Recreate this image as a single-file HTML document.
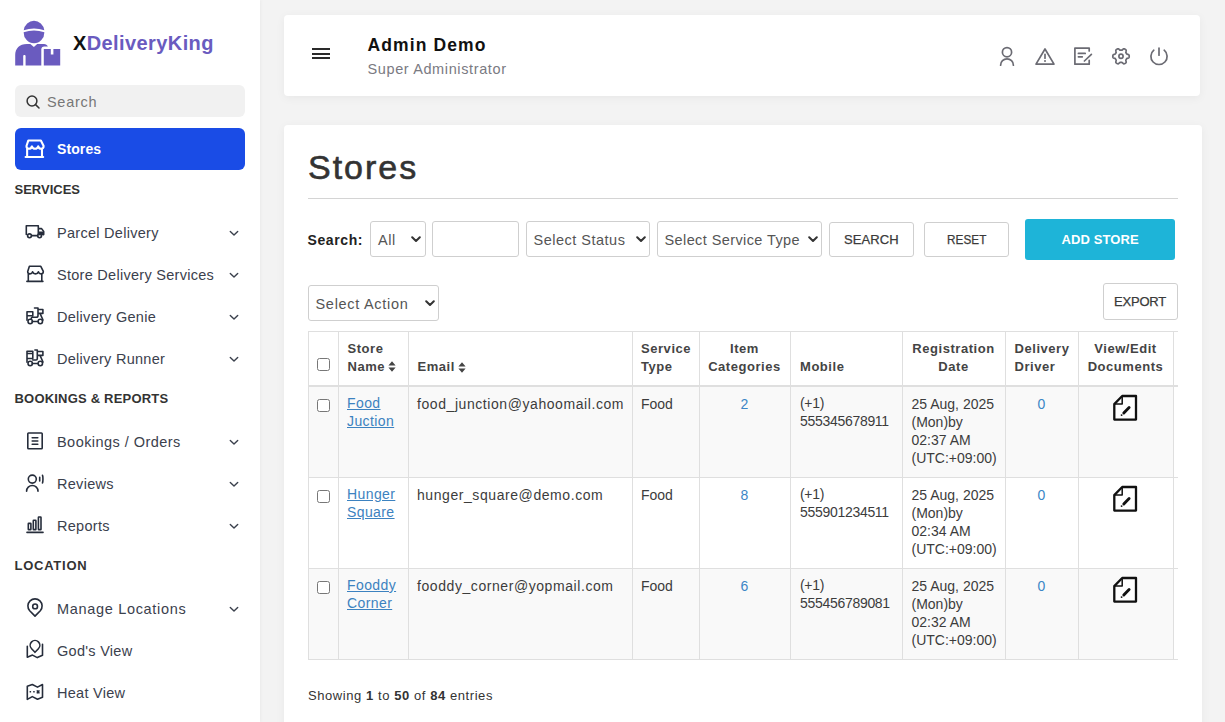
<!DOCTYPE html>
<html><head><meta charset="utf-8">
<style>
*{box-sizing:border-box;margin:0;padding:0}
html,body{width:1225px;height:722px;overflow:hidden}
body{font-family:"Liberation Sans",sans-serif;background:#f3f3f3;position:relative;color:#333}
.abs{position:absolute}
#side{position:absolute;left:0;top:0;width:260px;height:722px;background:#fff;box-shadow:1px 0 3px rgba(0,0,0,0.04)}
.logo-t{position:absolute;left:73px;top:31.5px;font-size:20px;letter-spacing:0.4px;font-weight:bold;color:#6a5bbf;white-space:nowrap}
.logo-t b{color:#111}
.sbox{position:absolute;left:15px;top:85px;width:230px;height:32px;background:#f1f1f1;border-radius:6px}
.sbox span{position:absolute;left:32px;top:9px;font-size:14.5px;letter-spacing:0.7px;color:#777}
.active{position:absolute;left:15px;top:128px;width:230px;height:42px;background:#1a4ce6;border-radius:6px}
.active span{position:absolute;left:42px;top:13px;font-size:14px;letter-spacing:0.1px;color:#fff;font-weight:bold}
.sec{position:absolute;left:14.5px;font-size:13px;font-weight:bold;color:#333;white-space:nowrap}
.nav{position:absolute;left:0;width:260px;height:42px}
.nav .t{position:absolute;left:57px;top:14px;font-size:14.5px;letter-spacing:0.28px;color:#3b414d;white-space:nowrap}
.nav svg.ic{position:absolute;left:25px;top:11px}
.nav svg.ch{position:absolute;left:229px;top:19px}
#hdr{position:absolute;left:284px;top:15px;width:916px;height:81px;background:#fff;border-radius:4px;box-shadow:0 2px 10px rgba(0,0,0,0.05)}
#main{position:absolute;left:284px;top:125px;width:918px;height:640px;background:#fff;border-radius:4px;box-shadow:0 2px 10px rgba(0,0,0,0.05)}
.name{left:83.5px;top:20px;font-size:17.5px;font-weight:bold;color:#111;white-space:nowrap;letter-spacing:1.1px}
.role{left:83.5px;top:45.5px;font-size:14.5px;color:#7a7a82;white-space:nowrap;letter-spacing:0.62px}
.title{left:308px;top:148px;font-size:34px;color:#333;letter-spacing:2px;-webkit-text-stroke:0.6px #333;white-space:nowrap}
.lbl{font-size:14px;font-weight:bold;color:#222;white-space:nowrap;letter-spacing:0.6px}
.ctl{border:1px solid #cfcfcf;border-radius:3px;background:#fff}
.sel{font-size:14.5px;color:#555;white-space:nowrap;letter-spacing:0.5px}
.btn{font-size:13px;color:#3a3a3a;white-space:nowrap;letter-spacing:0.1px;-webkit-text-stroke:0.25px #3a3a3a}
.addbtn{font-size:13px;color:#fff;font-weight:bold;white-space:nowrap;letter-spacing:0.1px}
.cb{width:13px;height:13px;border:1px solid #777;border-radius:2.5px;background:#fff}
.th{font-size:13px;font-weight:bold;color:#444;line-height:17.9px;white-space:nowrap;letter-spacing:0.55px}
.c{text-align:center}
.td{font-size:14px;color:#3c3c3c;line-height:18.3px;white-space:nowrap}
.em{letter-spacing:0.57px}
.mob{letter-spacing:-0.3px}
.lnk{color:#3c82c0;text-decoration:underline;letter-spacing:0.4px}
.num{color:#3c86c6}
.foot{font-size:13px;color:#333;white-space:nowrap;letter-spacing:0.57px}
</style></head><body>
<div id="side">
  <svg class="abs" style="left:14px;top:19px" width="48" height="48" viewBox="14 19 48 48">
    <path fill="#6a5bbf" d="M23.7 30.3Q34 26.9 44.3 30.3A10.4 11.1 0 0 0 23.7 30.3z"/>
    <path fill="#6a5bbf" d="M23.6 32.2Q34 28.7 44.4 32.2A10.4 11.1 0 0 1 23.6 32.2z"/>
    <path fill="#6a5bbf" d="M15.2 65.5V55C15.2 48.5 19.5 44 26.9 44H30.3L33.9 47L37.2 44H44C45.8 44 47.2 45 47.9 46.4H44.2C42.5 46.4 41.3 47.5 41.3 49.2V65.5H25.6V56C25.6 55.3 25.1 54.9 24.4 54.9C23.7 54.9 23.2 55.3 23.2 56V65.5Z"/>
    <path fill="#6a5bbf" d="M43.8 48.9h7v5.7h2.6V48.9h6.8v16.6H43.8z"/>
  </svg>
  <div class="logo-t"><b>X</b>DeliveryKing</div>
  <div class="sbox">
    <svg class="abs" style="left:11px;top:10px" width="14" height="14" viewBox="0 0 14 14"><circle cx="6" cy="6" r="4.9" fill="none" stroke="#333" stroke-width="1.5"/><path d="M9.6 9.6L13 13" stroke="#333" stroke-width="1.5" stroke-linecap="round"/></svg>
    <span>Search</span>
  </div>
  <div class="active">
    <svg class="abs" style="left:3px;top:-0.5px" width="33" height="33" viewBox="0 0 30 30"><path fill="none" stroke="#fff" stroke-width="1.9" stroke-linecap="round" stroke-linejoin="round" d="M9.4 11.3h11.4l2.5 5.1c0 1.6-1 2.5-2.3 2.5c-1.3 0-2.2-0.8-2.6-2.2c-0.5 1.5-1.5 2.2-2.9 2.2s-2.4-0.7-2.9-2.2c-0.4 1.4-1.3 2.2-2.6 2.2c-1.3 0-2.3-0.9-2.3-2.5zM8.3 19v7.4M21.8 19v7.4M6.9 26.4h16"/></svg>
    <span>Stores</span>
  </div>
  <div class="sec" style="top:182px">SERVICES</div>
  <div class="sec" style="top:391px;letter-spacing:0.2px">BOOKINGS &amp; REPORTS</div>
  <div class="sec" style="top:558px;letter-spacing:0.75px">LOCATION</div>
  <div class="nav" style="top:211px"><svg class="ic" style="left:20px;top:9px" width="30" height="24" viewBox="0 0 30 24"><path fill="none" stroke="#262d3b" stroke-width="1.6" stroke-linecap="round" stroke-linejoin="round" d="M6.3 14.5V5.8h12v8.2M18.3 8.6h3.3l2.1 2.9v3.1M12 15.6h5.5"/><path fill="#262d3b" d="M18.3 11.5h5.6v3.8h-5.6z"/><circle cx="9.5" cy="15.8" r="1.9" fill="none" stroke="#262d3b" stroke-width="1.6" stroke-linecap="round" stroke-linejoin="round"/><circle cx="19.6" cy="15.8" r="1.9" fill="none" stroke="#262d3b" stroke-width="1.6" stroke-linecap="round" stroke-linejoin="round"/></svg><span class="t">Parcel Delivery</span><svg class="ch" width="10" height="7" viewBox="0 0 10 7"><path d="M1.3 1.5l3.7 3.6l3.7-3.6" fill="none" stroke="#3b414d" stroke-width="1.4" stroke-linecap="round" stroke-linejoin="round"/></svg></div>
  <div class="nav" style="top:253px"><svg class="ic" style="left:20px;top:9px" width="30" height="24" viewBox="0 0 30 24"><path fill="none" stroke="#262d3b" stroke-width="1.6" stroke-linecap="round" stroke-linejoin="round" d="M9.4 4.3h11.4l2.5 5.1c0 1.6-1 2.5-2.3 2.5c-1.3 0-2.2-0.8-2.6-2.2c-0.5 1.5-1.5 2.2-2.9 2.2s-2.4-0.7-2.9-2.2c-0.4 1.4-1.3 2.2-2.6 2.2c-1.3 0-2.3-0.9-2.3-2.5zM8.3 12v7.4M21.8 12v7.4M6.9 19.4h16"/></svg><span class="t">Store Delivery Services</span><svg class="ch" width="10" height="7" viewBox="0 0 10 7"><path d="M1.3 1.5l3.7 3.6l3.7-3.6" fill="none" stroke="#3b414d" stroke-width="1.4" stroke-linecap="round" stroke-linejoin="round"/></svg></div>
  <div class="nav" style="top:295px"><svg class="ic" style="left:20px;top:9px" width="30" height="24" viewBox="0 0 30 24"><path fill="none" stroke="#262d3b" stroke-width="1.6" stroke-linecap="round" stroke-linejoin="round" d="M7 7.8h5.8v4H7zM7 11.8v4.5M14.5 4h3.5v7.5c0 1.2-0.8 1.8-1.8 1.8h-3.5c-1 0-1.5 0.6-1.5 1.5M18 5.5h4.9v3.9H18M20 9.4l3 6.6M12.3 17.5h5.4"/><circle cx="10.2" cy="17.5" r="2.2" fill="none" stroke="#262d3b" stroke-width="1.6" stroke-linecap="round" stroke-linejoin="round"/><circle cx="20.3" cy="17.5" r="2.2" fill="none" stroke="#262d3b" stroke-width="1.6" stroke-linecap="round" stroke-linejoin="round"/></svg><span class="t">Delivery Genie</span><svg class="ch" width="10" height="7" viewBox="0 0 10 7"><path d="M1.3 1.5l3.7 3.6l3.7-3.6" fill="none" stroke="#3b414d" stroke-width="1.4" stroke-linecap="round" stroke-linejoin="round"/></svg></div>
  <div class="nav" style="top:337px"><svg class="ic" style="left:20px;top:9px" width="30" height="24" viewBox="0 0 30 24"><path fill="none" stroke="#262d3b" stroke-width="1.6" stroke-linecap="round" stroke-linejoin="round" d="M7 5.2h5.8v7.3H7zM7 7.5h5.8M7 12.5v3.8M14.9 4h2.4v8.8c0 0.8-0.6 1.2-1.2 1.2h-3.3M17.3 5.5h5.6v3.9h-5.6M20 9.4l3 6.6M12.3 17.5h5.4"/><circle cx="10.2" cy="17.5" r="2.2" fill="none" stroke="#262d3b" stroke-width="1.6" stroke-linecap="round" stroke-linejoin="round"/><circle cx="20.3" cy="17.5" r="2.2" fill="none" stroke="#262d3b" stroke-width="1.6" stroke-linecap="round" stroke-linejoin="round"/></svg><span class="t">Delivery Runner</span><svg class="ch" width="10" height="7" viewBox="0 0 10 7"><path d="M1.3 1.5l3.7 3.6l3.7-3.6" fill="none" stroke="#3b414d" stroke-width="1.4" stroke-linecap="round" stroke-linejoin="round"/></svg></div>
  <div class="nav" style="top:420px"><svg class="ic" style="left:20px;top:9px" width="30" height="24" viewBox="0 0 30 24"><rect x="7.8" y="4" width="14.4" height="15.7" rx="0.8" fill="none" stroke="#262d3b" stroke-width="1.6" stroke-linecap="round" stroke-linejoin="round"/><path fill="none" stroke="#262d3b" stroke-width="1.6" stroke-linecap="round" stroke-linejoin="round" stroke-width="1.8" d="M12.2 8.7h5.6M12.2 12h5.6M12.2 15.2h5.6"/></svg><span class="t" style="letter-spacing:0.45px">Bookings / Orders</span><svg class="ch" width="10" height="7" viewBox="0 0 10 7"><path d="M1.3 1.5l3.7 3.6l3.7-3.6" fill="none" stroke="#3b414d" stroke-width="1.4" stroke-linecap="round" stroke-linejoin="round"/></svg></div>
  <div class="nav" style="top:462px"><svg class="ic" style="left:20px;top:9px" width="30" height="24" viewBox="0 0 30 24"><circle cx="12.3" cy="8.1" r="4" fill="none" stroke="#262d3b" stroke-width="1.6" stroke-linecap="round" stroke-linejoin="round"/><path fill="none" stroke="#262d3b" stroke-width="1.6" stroke-linecap="round" stroke-linejoin="round" d="M6.6 20.2a5.7 5.7 0 0 1 11.4 0M19.7 6.2v3.8M22.5 4.3c0.6 1.3 0.6 6.3 0 7.6"/></svg><span class="t">Reviews</span><svg class="ch" width="10" height="7" viewBox="0 0 10 7"><path d="M1.3 1.5l3.7 3.6l3.7-3.6" fill="none" stroke="#3b414d" stroke-width="1.4" stroke-linecap="round" stroke-linejoin="round"/></svg></div>
  <div class="nav" style="top:504px"><svg class="ic" style="left:20px;top:9px" width="30" height="24" viewBox="0 0 30 24"><rect x="8.3" y="10.4" width="2.6" height="6.2" rx="0.4" fill="none" stroke="#262d3b" stroke-width="1.6" stroke-linecap="round" stroke-linejoin="round"/><rect x="13.3" y="7.3" width="2.6" height="9.3" rx="0.4" fill="none" stroke="#262d3b" stroke-width="1.6" stroke-linecap="round" stroke-linejoin="round"/><rect x="18.4" y="4" width="2.6" height="12.6" rx="0.4" fill="none" stroke="#262d3b" stroke-width="1.6" stroke-linecap="round" stroke-linejoin="round"/><path fill="none" stroke="#262d3b" stroke-width="1.6" stroke-linecap="round" stroke-linejoin="round" stroke-width="1.8" d="M7 19.4h16"/></svg><span class="t">Reports</span><svg class="ch" width="10" height="7" viewBox="0 0 10 7"><path d="M1.3 1.5l3.7 3.6l3.7-3.6" fill="none" stroke="#3b414d" stroke-width="1.4" stroke-linecap="round" stroke-linejoin="round"/></svg></div>
  <div class="nav" style="top:587px"><svg class="ic" style="left:20px;top:9px" width="30" height="24" viewBox="0 0 30 24"><path fill="none" stroke="#262d3b" stroke-width="1.6" stroke-linecap="round" stroke-linejoin="round" d="M15 20.1l-5.3-5.4a7.1 7.1 0 1 1 10.6 0z"/><circle cx="15.1" cy="10.4" r="2.4" fill="none" stroke="#262d3b" stroke-width="1.6" stroke-linecap="round" stroke-linejoin="round"/></svg><span class="t" style="letter-spacing:0.68px">Manage Locations</span><svg class="ch" width="10" height="7" viewBox="0 0 10 7"><path d="M1.3 1.5l3.7 3.6l3.7-3.6" fill="none" stroke="#3b414d" stroke-width="1.4" stroke-linecap="round" stroke-linejoin="round"/></svg></div>
  <div class="nav" style="top:629px"><svg class="ic" style="left:20px;top:9px" width="30" height="24" viewBox="0 0 30 24"><path fill="none" stroke="#262d3b" stroke-width="1.6" stroke-linecap="round" stroke-linejoin="round" d="M7.3 8.3v10.9l5.2-2.1l4.8 2.5l5.2-2.3V6.2"/><path fill="none" stroke="#262d3b" stroke-width="1.6" stroke-linecap="round" stroke-linejoin="round" d="M15 14.3l-3.4-3.6a4.8 4.8 0 1 1 6.8 0z"/></svg><span class="t">God's View</span></div>
  <div class="nav" style="top:671px"><svg class="ic" style="left:20px;top:9px" width="30" height="24" viewBox="0 0 30 24"><path fill="none" stroke="#262d3b" stroke-width="1.6" stroke-linecap="round" stroke-linejoin="round" d="M7.3 6.2l5-1.7l5.2 2.6l5-2.6v12.8l-5 1.9l-5.2-2.6l-5 2.8z"/><path fill="#262d3b" d="M9.6 11.1h1.5v1.5H9.6zM13.2 11.1h1.5v1.5h-1.5z"/><path fill="none" stroke="#262d3b" stroke-width="1.6" stroke-linecap="round" stroke-linejoin="round" stroke-width="1.3" d="M17.3 10.9l1.6 1.9M18.9 10.9l-1.6 1.9"/></svg><span class="t">Heat View</span></div>
</div>
<div id="hdr">
  <div class="abs" style="left:28px;top:33.2px;width:18px;height:1.9px;background:#2a2a2a"></div>
  <div class="abs" style="left:28px;top:37.7px;width:18px;height:1.9px;background:#2a2a2a"></div>
  <div class="abs" style="left:28px;top:42.2px;width:18px;height:1.9px;background:#2a2a2a"></div>
  <div class="abs name">Admin Demo</div>
  <div class="abs role">Super Administrator</div>
  <svg class="abs" style="left:700px;top:25px" width="200" height="45" viewBox="984 40 200 45">
    <circle cx="1007" cy="52.2" r="4.6" fill="none" stroke="#6b6b73" stroke-width="1.7" stroke-linecap="round" stroke-linejoin="round"/>
    <path fill="none" stroke="#6b6b73" stroke-width="1.7" stroke-linecap="round" stroke-linejoin="round" d="M1000.6 65.2A6.4 6.4 0 0 1 1013.4 65.2"/>
    <path fill="none" stroke="#6b6b73" stroke-width="1.7" stroke-linecap="round" stroke-linejoin="round" d="M1045 49L1054 64.1H1036Z"/>
    <path fill="none" stroke="#6b6b73" stroke-width="1.7" stroke-linecap="round" stroke-linejoin="round" d="M1045 54.4V58.2"/><circle cx="1045" cy="61" r="1" fill="#6b6b73"/>
    <path fill="none" stroke="#6b6b73" stroke-width="1.7" stroke-linecap="round" stroke-linejoin="round" d="M1089.2 51V48.1H1074.9V64.2H1089.2V60.3M1078.4 53.4H1085.2M1078.4 56.8H1082.3M1084.4 61L1091.4 54.4"/>
    <g transform="translate(1121 56.3)"><path fill="none" stroke="#6b6b73" stroke-width="1.7" stroke-linecap="round" stroke-linejoin="round" d="M8.20 0.00 L8.18 0.43 L8.12 0.85 L7.98 1.26 L7.62 1.62 L6.91 1.85 L6.19 2.01 L5.81 2.23 L5.60 2.49 L5.44 2.77 L5.28 3.05 L5.12 3.33 L4.96 3.61 L4.84 3.92 L4.84 4.36 L5.06 5.06 L5.21 5.79 L5.08 6.28 L4.80 6.61 L4.46 6.87 L4.10 7.10 L3.72 7.30 L3.32 7.46 L2.89 7.54 L2.41 7.41 L1.85 6.91 L1.35 6.37 L0.97 6.15 L0.64 6.10 L0.32 6.10 L0.00 6.10 L-0.32 6.10 L-0.64 6.10 L-0.97 6.15 L-1.35 6.37 L-1.85 6.91 L-2.41 7.41 L-2.89 7.54 L-3.32 7.46 L-3.72 7.30 L-4.10 7.10 L-4.46 6.87 L-4.80 6.61 L-5.08 6.28 L-5.21 5.79 L-5.06 5.06 L-4.84 4.36 L-4.84 3.92 L-4.96 3.61 L-5.12 3.33 L-5.28 3.05 L-5.44 2.77 L-5.60 2.49 L-5.81 2.23 L-6.19 2.01 L-6.91 1.85 L-7.62 1.62 L-7.98 1.26 L-8.12 0.85 L-8.18 0.43 L-8.20 0.00 L-8.18 -0.43 L-8.12 -0.85 L-7.98 -1.26 L-7.62 -1.62 L-6.91 -1.85 L-6.19 -2.01 L-5.81 -2.23 L-5.60 -2.49 L-5.44 -2.77 L-5.28 -3.05 L-5.12 -3.33 L-4.96 -3.61 L-4.84 -3.92 L-4.84 -4.36 L-5.06 -5.06 L-5.21 -5.79 L-5.08 -6.28 L-4.80 -6.61 L-4.46 -6.87 L-4.10 -7.10 L-3.72 -7.30 L-3.32 -7.46 L-2.89 -7.54 L-2.41 -7.41 L-1.85 -6.91 L-1.35 -6.37 L-0.97 -6.15 L-0.64 -6.10 L-0.32 -6.10 L-0.00 -6.10 L0.32 -6.10 L0.64 -6.10 L0.97 -6.15 L1.35 -6.37 L1.85 -6.91 L2.41 -7.41 L2.89 -7.54 L3.32 -7.46 L3.72 -7.30 L4.10 -7.10 L4.46 -6.87 L4.80 -6.61 L5.08 -6.28 L5.21 -5.79 L5.06 -5.06 L4.84 -4.36 L4.84 -3.92 L4.96 -3.61 L5.12 -3.33 L5.28 -3.05 L5.44 -2.77 L5.60 -2.49 L5.81 -2.23 L6.19 -2.01 L6.91 -1.85 L7.62 -1.62 L7.98 -1.26 L8.12 -0.85 L8.18 -0.43 L8.20 -0.00z"/><circle cx="0" cy="0" r="2.1" fill="none" stroke="#6b6b73" stroke-width="1.7" stroke-linecap="round" stroke-linejoin="round"/></g>
    <path fill="none" stroke="#6b6b73" stroke-width="1.7" stroke-linecap="round" stroke-linejoin="round" d="M1159 48V55.2M1153.8 50.2A8.1 8.1 0 1 0 1164.2 50.2"/>
  </svg>
</div>
<div id="main"></div>
<div class="abs title">Stores</div>
<div class="abs" style="left:308px;top:198px;width:870px;height:1px;background:#d4d4d4"></div>
<div class="abs lbl" style="left:307.5px;top:231.5px">Search:</div>
<div class="abs ctl" style="left:370px;top:221px;width:56px;height:36px;"></div>
<div class="abs sel" style="left:378px;top:231.5px">All</div>
<svg class="abs" style="left:411px;top:236px" width="10" height="7" viewBox="0 0 10 7"><path d="M1.2 1.2L5 5L8.8 1.2" fill="none" stroke="#333" stroke-width="2" stroke-linecap="round" stroke-linejoin="round"/></svg>
<div class="abs ctl" style="left:432px;top:221px;width:87px;height:36px;"></div>
<div class="abs ctl" style="left:526px;top:221px;width:124px;height:36px;"></div>
<div class="abs sel" style="left:533.5px;top:231.5px">Select Status</div>
<svg class="abs" style="left:636px;top:236px" width="10" height="7" viewBox="0 0 10 7"><path d="M1.2 1.2L5 5L8.8 1.2" fill="none" stroke="#333" stroke-width="2" stroke-linecap="round" stroke-linejoin="round"/></svg>
<div class="abs ctl" style="left:657px;top:221px;width:165px;height:36px;"></div>
<div class="abs sel" style="left:664.5px;top:231.5px;letter-spacing:0.4px">Select Service Type</div>
<svg class="abs" style="left:808px;top:236px" width="10" height="7" viewBox="0 0 10 7"><path d="M1.2 1.2L5 5L8.8 1.2" fill="none" stroke="#333" stroke-width="2" stroke-linecap="round" stroke-linejoin="round"/></svg>
<div class="abs ctl" style="left:829px;top:222px;width:85px;height:35px;"></div>
<div class="abs btn" style="left:844px;top:232px">SEARCH</div>
<div class="abs ctl" style="left:924px;top:222px;width:85px;height:35px;"></div>
<div class="abs btn" style="left:946.5px;top:232px;transform:scaleX(0.9);transform-origin:0 0">RESET</div>
<div class="abs" style="left:1025px;top:219px;width:150px;height:41px;background:#1eb4d8;border-radius:3px"></div>
<div class="abs addbtn" style="left:1061.5px;top:231.5px">ADD STORE</div>
<div class="abs ctl" style="left:308px;top:285px;width:131px;height:36px;"></div>
<div class="abs sel" style="left:315.5px;top:295.5px;letter-spacing:0.7px">Select Action</div>
<svg class="abs" style="left:425px;top:300px" width="10" height="7" viewBox="0 0 10 7"><path d="M1.2 1.2L5 5L8.8 1.2" fill="none" stroke="#333" stroke-width="2" stroke-linecap="round" stroke-linejoin="round"/></svg>
<div class="abs ctl" style="left:1103px;top:283px;width:75px;height:37px;"></div>
<div class="abs btn" style="left:1114px;top:294px;letter-spacing:-0.2px">EXPORT</div>
<div class="abs" style="left:308px;top:387px;width:865px;height:90px;background:#f9f9f9"></div>
<div class="abs" style="left:308px;top:569px;width:865px;height:90px;background:#f9f9f9"></div>
<div class="abs" style="left:308px;top:331px;width:870px;height:1px;background:#dfdfdf"></div>
<div class="abs" style="left:308px;top:385px;width:870px;height:2px;background:#dfdfdf"></div>
<div class="abs" style="left:308px;top:477px;width:870px;height:1px;background:#dfdfdf"></div>
<div class="abs" style="left:308px;top:568px;width:870px;height:1px;background:#dfdfdf"></div>
<div class="abs" style="left:308px;top:659px;width:870px;height:1px;background:#dfdfdf"></div>
<div class="abs" style="left:308px;top:331px;width:1px;height:329px;background:#dfdfdf"></div>
<div class="abs" style="left:338px;top:331px;width:1px;height:329px;background:#dfdfdf"></div>
<div class="abs" style="left:408px;top:331px;width:1px;height:329px;background:#dfdfdf"></div>
<div class="abs" style="left:632px;top:331px;width:1px;height:329px;background:#dfdfdf"></div>
<div class="abs" style="left:699px;top:331px;width:1px;height:329px;background:#dfdfdf"></div>
<div class="abs" style="left:790px;top:331px;width:1px;height:329px;background:#dfdfdf"></div>
<div class="abs" style="left:902px;top:331px;width:1px;height:329px;background:#dfdfdf"></div>
<div class="abs" style="left:1005px;top:331px;width:1px;height:329px;background:#dfdfdf"></div>
<div class="abs" style="left:1078px;top:331px;width:1px;height:329px;background:#dfdfdf"></div>
<div class="abs" style="left:1173px;top:331px;width:1px;height:329px;background:#dfdfdf"></div>
<div class="abs cb" style="left:317px;top:358px"></div>
<div class="abs th" style="left:347.5px;top:340px">Store<br>Name<svg width="8" height="11" viewBox="0 0 8 11" style="margin-left:3px;vertical-align:-1.5px"><path d="M4 0.3L7.6 4.4H0.4z M4 10.7L7.6 6.6H0.4z" fill="#444"/></svg></div>
<div class="abs th" style="left:417.5px;top:358px">Email<svg width="8" height="11" viewBox="0 0 8 11" style="margin-left:3px;vertical-align:-1.5px"><path d="M4 0.3L7.6 4.4H0.4z M4 10.7L7.6 6.6H0.4z" fill="#444"/></svg></div>
<div class="abs th" style="left:641px;top:340px">Service<br>Type</div>
<div class="abs th c" style="left:699px;width:91px;top:340px">Item<br>Categories</div>
<div class="abs th" style="left:800px;top:358px">Mobile</div>
<div class="abs th c" style="left:902px;width:103px;top:340px">Registration<br>Date</div>
<div class="abs th" style="left:1014.5px;top:340px">Delivery<br>Driver</div>
<div class="abs th c" style="left:1078px;width:95px;top:340px">View/Edit<br>Documents</div>
<div class="abs cb" style="left:317px;top:399px"></div>
<div class="abs td lnk" style="left:347px;top:393.5px">Food<br>Juction</div>
<div class="abs td em" style="left:417px;top:394.5px">food_junction@yahoomail.com</div>
<div class="abs td" style="left:641px;top:394.5px">Food</div>
<div class="abs td c num" style="left:699px;width:91px;top:394.5px">2</div>
<div class="abs td mob" style="left:800px;top:394px">(+1)<br>555345678911</div>
<div class="abs td dt" style="left:911.5px;top:394.5px">25 Aug, 2025<br>(Mon)by<br>02:37 AM<br>(UTC:+09:00)</div>
<div class="abs td c num" style="left:1005px;width:73px;top:394.5px">0</div>
<svg class="abs" style="left:1112px;top:394px" width="26" height="28" viewBox="0 0 26 28"><path d="M2.3 10.1L10.2 2H24V25.6H2.3z" fill="#fff" stroke="#111" stroke-width="2.3" stroke-linejoin="round"/><path d="M2.8 10.1H10.2V2.5" fill="none" stroke="#111" stroke-width="1.5" stroke-linejoin="round"/><path d="M11.8 19L17.1 13.6" stroke="#111" stroke-width="2.9" stroke-linecap="round"/><circle cx="9.6" cy="21.1" r="0.95" fill="#111"/></svg>
<div class="abs cb" style="left:317px;top:490px"></div>
<div class="abs td lnk" style="left:347px;top:484.5px">Hunger<br>Square</div>
<div class="abs td em" style="left:417px;top:485.5px">hunger_square@demo.com</div>
<div class="abs td" style="left:641px;top:485.5px">Food</div>
<div class="abs td c num" style="left:699px;width:91px;top:485.5px">8</div>
<div class="abs td mob" style="left:800px;top:485px">(+1)<br>555901234511</div>
<div class="abs td dt" style="left:911.5px;top:485.5px">25 Aug, 2025<br>(Mon)by<br>02:34 AM<br>(UTC:+09:00)</div>
<div class="abs td c num" style="left:1005px;width:73px;top:485.5px">0</div>
<svg class="abs" style="left:1112px;top:485px" width="26" height="28" viewBox="0 0 26 28"><path d="M2.3 10.1L10.2 2H24V25.6H2.3z" fill="#fff" stroke="#111" stroke-width="2.3" stroke-linejoin="round"/><path d="M2.8 10.1H10.2V2.5" fill="none" stroke="#111" stroke-width="1.5" stroke-linejoin="round"/><path d="M11.8 19L17.1 13.6" stroke="#111" stroke-width="2.9" stroke-linecap="round"/><circle cx="9.6" cy="21.1" r="0.95" fill="#111"/></svg>
<div class="abs cb" style="left:317px;top:581px"></div>
<div class="abs td lnk" style="left:347px;top:575.5px">Fooddy<br>Corner</div>
<div class="abs td em" style="left:417px;top:576.5px">fooddy_corner@yopmail.com</div>
<div class="abs td" style="left:641px;top:576.5px">Food</div>
<div class="abs td c num" style="left:699px;width:91px;top:576.5px">6</div>
<div class="abs td mob" style="left:800px;top:576px">(+1)<br>555456789081</div>
<div class="abs td dt" style="left:911.5px;top:576.5px">25 Aug, 2025<br>(Mon)by<br>02:32 AM<br>(UTC:+09:00)</div>
<div class="abs td c num" style="left:1005px;width:73px;top:576.5px">0</div>
<svg class="abs" style="left:1112px;top:576px" width="26" height="28" viewBox="0 0 26 28"><path d="M2.3 10.1L10.2 2H24V25.6H2.3z" fill="#fff" stroke="#111" stroke-width="2.3" stroke-linejoin="round"/><path d="M2.8 10.1H10.2V2.5" fill="none" stroke="#111" stroke-width="1.5" stroke-linejoin="round"/><path d="M11.8 19L17.1 13.6" stroke="#111" stroke-width="2.9" stroke-linecap="round"/><circle cx="9.6" cy="21.1" r="0.95" fill="#111"/></svg>
<div class="abs foot" style="left:308px;top:687.5px">Showing <b>1</b> to <b>50</b> of <b>84</b> entries</div>
</body></html>
